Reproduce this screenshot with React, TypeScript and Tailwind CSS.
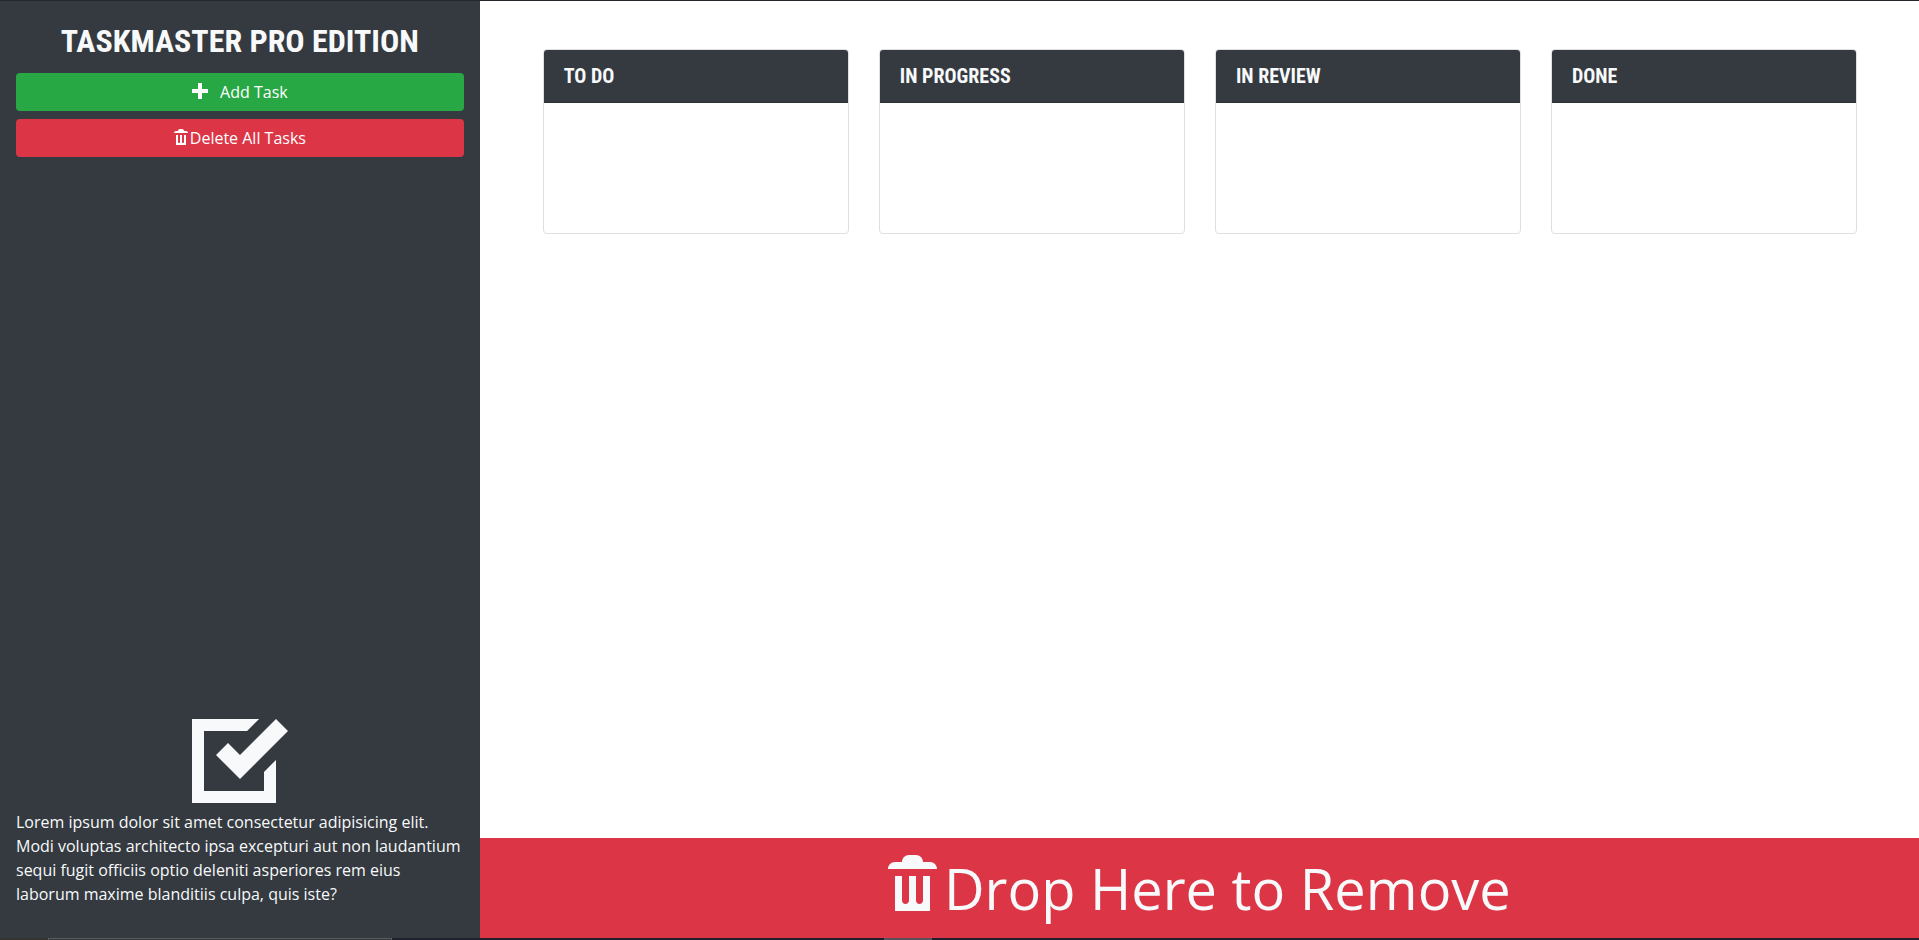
const cards = ["To Do", "In Progress", "In Review", "Done"];

function Icon({ d, className, viewBox = "0 0 8 8" }: { d: string; className: string; viewBox?: string }) {
  return (
    <svg aria-hidden="true" viewBox={viewBox} fill="currentColor" className={className}>
      <path d={d} />
    </svg>
  );
}

const PLUS = "M3 0v3h-3v2h3v3h2v-3h3v-2h-3v-3h-2z";
const TRASH =
  "M3 0c-.55 0-1 .45-1 1h-1c-.55 0-1 .45-1 1h7c0-.55-.45-1-1-1h-1c0-.55-.45-1-1-1h-1zm-2 3v5h5v-5h-1v3.5c0 .28-.22.5-.5.5s-.5-.22-.5-.5v-3.5h-1v3.5c0 .28-.22.5-.5.5s-.5-.22-.5-.5v-3.5h-1z";
const TASK =
  "M0 0v7h7v-3.59l-1 1v1.59h-5v-5h3.59l1-1h-5.59zm7 0l-3 3-1-1-1 1 2 2 4-4-1-1z";

export default function App() {
  return (
    <div className="flex min-h-screen flex-col border-t border-[#23272b] bg-white font-['Open_Sans','Noto_Sans',sans-serif] text-base text-[#f8f9fa]">
      <div className="flex grow">
        <aside className="flex w-1/4 shrink-0 flex-col justify-between bg-[#343a40] p-4">
          <div>
            <h1 className="mb-2 text-center font-['Roboto_Condensed','Liberation_Sans_Narrow',sans-serif] text-[32px] leading-[48px] font-bold whitespace-nowrap uppercase">
              Taskmaster Pro Edition
            </h1>
            <button
              type="button"
              className="mb-2 flex h-[38px] w-full items-center justify-center gap-3 rounded bg-[#28a745] text-white"
            >
              <Icon d={PLUS} className="mb-0.5 size-4" />
              Add Task
            </button>
            <button
              type="button"
              className="flex h-[38px] w-full items-center justify-center rounded bg-[#dc3545] text-white"
            >
              <Icon d={TRASH} className="mb-0.5 size-4" />
              Delete All Tasks
            </button>
          </div>
          <div>
            <Icon d={TASK} viewBox="0 0 8 7" className="mx-auto mb-[7px] w-24" />
            <p className="mb-4 leading-6">
              Lorem ipsum dolor sit amet consectetur adipisicing elit. Modi voluptas architecto ipsa
              excepturi aut non laudantium sequi fugit officiis optio deleniti asperiores rem eius
              laborum maxime blanditiis culpa, quis iste?
            </p>
          </div>
        </aside>
        <div className="flex grow flex-col justify-between">
          <main className="grid grid-cols-4 gap-[30px] py-12 pr-[62px] pl-[63px]">
            {cards.map((title) => (
              <section key={title} className="overflow-hidden rounded border border-[#dfdfdf] bg-white">
                <h2 className="border-b border-[#2d3237] bg-[#343a40] px-5 py-3 font-['Roboto_Condensed','Liberation_Sans_Narrow',sans-serif] text-xl leading-7 font-bold uppercase">
                  {title}
                </h2>
                <ul className="min-h-[130px]" />
              </section>
            ))}
          </main>
          <div className="flex items-center justify-center bg-[#dc3545] p-2 text-[56px] leading-[84px]">
            <Icon d={TRASH} className="mb-2.5 size-14" />
            <span>Drop Here to Remove</span>
          </div>
        </div>
      </div>
      <div className="flex h-[2px] bg-[#20202e]">
        <div className="w-12 bg-[#33342f]" />
        <div className="w-[344px] border border-b-0 border-[#5a5b5e] bg-[#343638]" />
        <div className="ml-[492px] w-12 bg-[#55505a]" />
      </div>
    </div>
  );
}
